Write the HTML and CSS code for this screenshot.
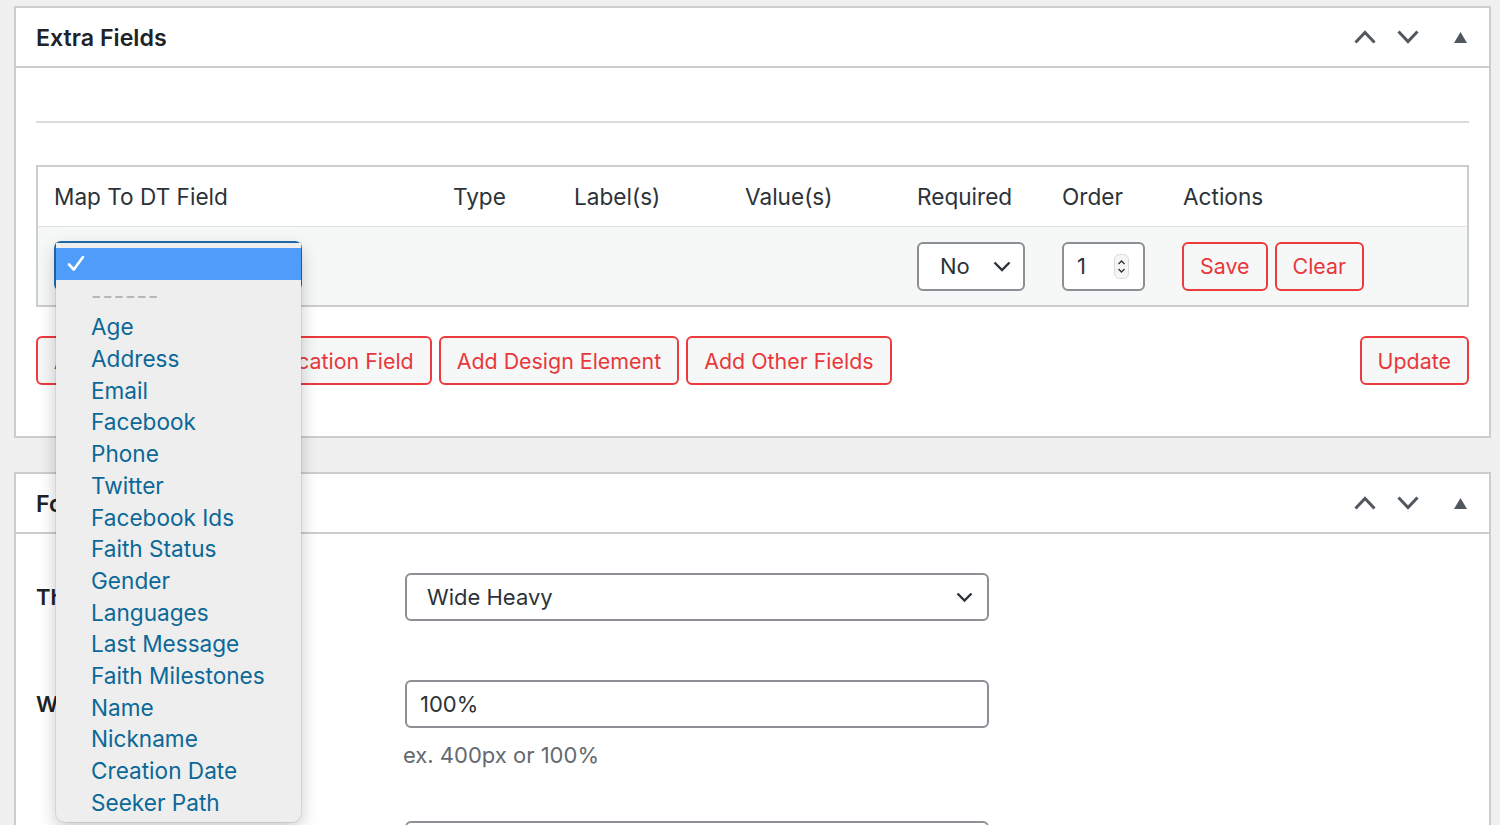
FILE: index.html
```html
<!DOCTYPE html>
<html lang="en">
<head>
<meta charset="utf-8">
<title>Extra Fields</title>
<link rel="stylesheet" href="styles.css">
</head>
<body>
<div class="wrap">
  <section class="postbox">
    <header class="postbox-header">
      <h2>Extra Fields</h2>
      <div class="handle-actions">
        <svg class="ico-up" width="22" height="14" viewBox="0 0 22 14"><polyline points="1.5,12.5 11,2.5 20.5,12.5" fill="none" stroke="#50575e" stroke-width="3"/></svg>
        <svg class="ico-down" width="22" height="14" viewBox="0 0 22 14"><polyline points="1.5,1.5 11,11.5 20.5,1.5" fill="none" stroke="#50575e" stroke-width="3"/></svg>
        <svg class="ico-tri" width="13" height="11" viewBox="0 0 13 11"><polygon points="0,11 6.5,0 13,11" fill="#50575e"/></svg>
      </div>
    </header>
    <div class="inside">
      <div class="spacer"></div>
      <div class="fields-table">
        <div class="tr th-row">
          <div>Map To DT Field</div>
          <div>Type</div>
          <div>Label(s)</div>
          <div>Value(s)</div>
          <div>Required</div>
          <div>Order</div>
          <div>Actions</div>
        </div>
        <div class="tr data-row">
          <div class="cell">
            <div class="map-select">
              <div class="menu">
                <div class="opt selected">
                  <svg class="check" width="18" height="17" viewBox="0 0 18 17"><polyline points="2,9.5 6.8,14.5 16,2" fill="none" stroke="#fff" stroke-width="2.6" stroke-linecap="round" stroke-linejoin="round"/></svg>
                </div>
                <div class="opt sep">------</div>
                <div class="opt">Age</div>
                <div class="opt">Address</div>
                <div class="opt">Email</div>
                <div class="opt">Facebook</div>
                <div class="opt">Phone</div>
                <div class="opt">Twitter</div>
                <div class="opt">Facebook Ids</div>
                <div class="opt">Faith Status</div>
                <div class="opt">Gender</div>
                <div class="opt">Languages</div>
                <div class="opt">Last Message</div>
                <div class="opt">Faith Milestones</div>
                <div class="opt">Name</div>
                <div class="opt">Nickname</div>
                <div class="opt">Creation Date</div>
                <div class="opt">Seeker Path</div>
              </div>
            </div>
          </div>
          <div></div>
          <div></div>
          <div></div>
          <div class="cell">
            <div class="req-select">
              <span>No</span>
              <svg width="18" height="11" viewBox="0 0 18 11"><polyline points="1.5,1.5 9,9 16.5,1.5" fill="none" stroke="#2c3338" stroke-width="2.4"/></svg>
            </div>
          </div>
          <div class="cell">
            <div class="num-input">
              <span>1</span>
              <svg width="15" height="25" viewBox="0 0 15 25"><rect x="0.5" y="0.5" width="14" height="24" rx="5" fill="#f6f6f6" stroke="#d8d8d8"/><polyline points="4.5,10 7.5,7 10.5,10" fill="none" stroke="#333" stroke-width="1.4"/><polyline points="4.5,15 7.5,18 10.5,15" fill="none" stroke="#333" stroke-width="1.4"/></svg>
            </div>
          </div>
          <div class="cell actions">
            <button class="btn">Save</button>
            <button class="btn">Clear</button>
          </div>
        </div>
      </div>
      <div class="button-row">
        <div class="btn-group">
          <button class="btn">Add DT Field</button>
          <button class="btn">Add Location Field</button>
          <button class="btn">Add Design Element</button>
          <button class="btn">Add Other Fields</button>
        </div>
        <button class="btn">Update</button>
      </div>
    </div>
  </section>

  <section class="postbox">
    <header class="postbox-header">
      <h2>Form Styles</h2>
      <div class="handle-actions">
        <svg class="ico-up" width="22" height="14" viewBox="0 0 22 14"><polyline points="1.5,12.5 11,2.5 20.5,12.5" fill="none" stroke="#50575e" stroke-width="3"/></svg>
        <svg class="ico-down" width="22" height="14" viewBox="0 0 22 14"><polyline points="1.5,1.5 11,11.5 20.5,1.5" fill="none" stroke="#50575e" stroke-width="3"/></svg>
        <svg class="ico-tri" width="13" height="11" viewBox="0 0 13 11"><polygon points="0,11 6.5,0 13,11" fill="#50575e"/></svg>
      </div>
    </header>
    <div class="inside form-inside">
      <div class="form-row">
        <div class="form-label">Theme</div>
        <div class="form-field">
          <div class="wide-select">
            <span>Wide Heavy</span>
            <svg width="17" height="11" viewBox="0 0 17 11"><polyline points="1.5,1.5 8.5,8.5 15.5,1.5" fill="none" stroke="#2c3338" stroke-width="2.4"/></svg>
          </div>
        </div>
      </div>
      <div class="form-row">
        <div class="form-label">Width</div>
        <div class="form-field">
          <div class="text-input">100%</div>
          <p class="hint">ex. 400px or 100%</p>
        </div>
      </div>
      <div class="form-row">
        <div class="form-label"></div>
        <div class="form-field">
          <div class="text-input"></div>
        </div>
      </div>
    </div>
  </section>
</div>
</body>
</html>
```

FILE: styles.css
```css
* {
  box-sizing: border-box;
}

body {
  margin: 0;
  background: #f0f0f1;
  font-family: Inter, "Noto Sans", "Liberation Sans", sans-serif;
  font-size: 22px;
  color: #1d2327;
}

.wrap {
  padding: 6px 9px 0 14px;
}

.postbox {
  background: #fff;
  border: 2px solid #cbcdd0;
}

.postbox + .postbox {
  margin-top: 34px;
}

.postbox-header {
  height: 60px;
  display: flex;
  align-items: center;
  justify-content: space-between;
  padding: 0 22px 0 20px;
  border-bottom: 2px solid #cbcdd0;
}

.postbox-header h2 {
  margin: 0 0 0 0;
  padding-top: 1px;
  font-size: 23.2px;
  font-weight: 600;
  color: #1d2327;
}

.handle-actions {
  display: flex;
  align-items: center;
}

.handle-actions svg {
  display: block;
}

.ico-down {
  margin-left: 21px;
}

.ico-tri {
  margin-left: 35px;
}

.inside {
  padding: 0 20px 51px;
}

.spacer {
  height: 55px;
  border-bottom: 2px solid #dcdcde;
}

.fields-table {
  margin-top: 42px;
  border: 2px solid #cbcdd0;
}

.tr {
  display: grid;
  grid-template-columns: 399px 121px 171px 172px 145px 121px 1fr;
  align-items: center;
}

.th-row {
  height: 60px;
  border-bottom: 1px solid #e2e3e5;
  background: #fff;
  color: #2c3338;
  font-size: 22.6px;
}

.th-row > div {
  padding-left: 16px;
}

.data-row {
  height: 78px;
  background: #f6f7f7;
}

.cell {
  padding-left: 16px;
}

.map-select {
  position: relative;
  width: 248px;
  height: 50px;
  border: 2px solid #2271b1;
  border-radius: 7px;
  background: #fff;
}

.menu {
  position: absolute;
  z-index: 10;
  top: 0;
  left: 0;
  width: 245px;
  padding: 5px 0 4px;
  background: #eeeeee;
  border-radius: 0 0 9px 9px;
  box-shadow: 0 6px 18px rgba(0, 0, 0, 0.22), 0 0 0 1px rgba(0, 0, 0, 0.07);
  font-size: 22.6px;
}

.opt {
  height: 31.7px;
  line-height: 31.7px;
  padding-left: 35px;
  color: #0b6897;
  white-space: nowrap;
}

.opt.selected {
  background: #4f9dfa;
  padding-left: 11px;
  display: flex;
  align-items: center;
}

.opt.sep {
  color: #b4b4b4;
  letter-spacing: 1px;
}

.check {
  display: block;
}

.req-select {
  width: 108px;
  height: 49px;
  border: 2px solid #8c8f94;
  border-radius: 6px;
  background: #fff;
  display: flex;
  align-items: center;
  justify-content: space-between;
  padding: 0 12px 0 21px;
  color: #2c3338;
}

.num-input {
  width: 83px;
  height: 49px;
  border: 2px solid #8c8f94;
  border-radius: 6px;
  background: #fff;
  display: flex;
  align-items: center;
  justify-content: space-between;
  padding: 0 14px 0 13px;
  color: #2c3338;
}

.num-input svg,
.req-select svg,
.wide-select svg {
  display: block;
}

.actions {
  display: flex;
  gap: 7px;
  padding-left: 15px;
}

.btn {
  height: 49px;
  padding: 2px 16px 0;
  border: 2px solid #ec3a3d;
  border-radius: 6px;
  background: #f6f7f7;
  color: #e8383b;
  font-family: inherit;
  font-size: 21.4px;
  line-height: 1;
  white-space: nowrap;
}

.button-row {
  margin-top: 29px;
  display: flex;
  justify-content: space-between;
}

.btn-group {
  display: flex;
  gap: 7px;
}

.btn-group .btn:first-child {
  padding-right: 14px;
}

.form-inside {
  padding-top: 39px;
  padding-bottom: 20px;
}

.form-row {
  display: grid;
  grid-template-columns: 369px 584px;
  margin-bottom: 59px;
}

.form-row:nth-child(2) {
  margin-bottom: 51px;
}

.form-label {
  min-height: 48px;
  line-height: 48px;
  font-weight: 600;
  color: #1d2327;
}

.wide-select {
  height: 48px;
  border: 2px solid #8c8f94;
  border-radius: 6px;
  background: #fff;
  display: flex;
  align-items: center;
  justify-content: space-between;
  padding: 0 14px 0 20px;
  color: #2c3338;
}

.text-input {
  height: 48px;
  border: 2px solid #8c8f94;
  border-radius: 6px;
  background: #fff;
  line-height: 44px;
  padding-left: 13px;
  color: #2c3338;
}

.hint {
  margin: 12px 0 0 -2px;
  line-height: 30px;
  color: #646970;
}
```
